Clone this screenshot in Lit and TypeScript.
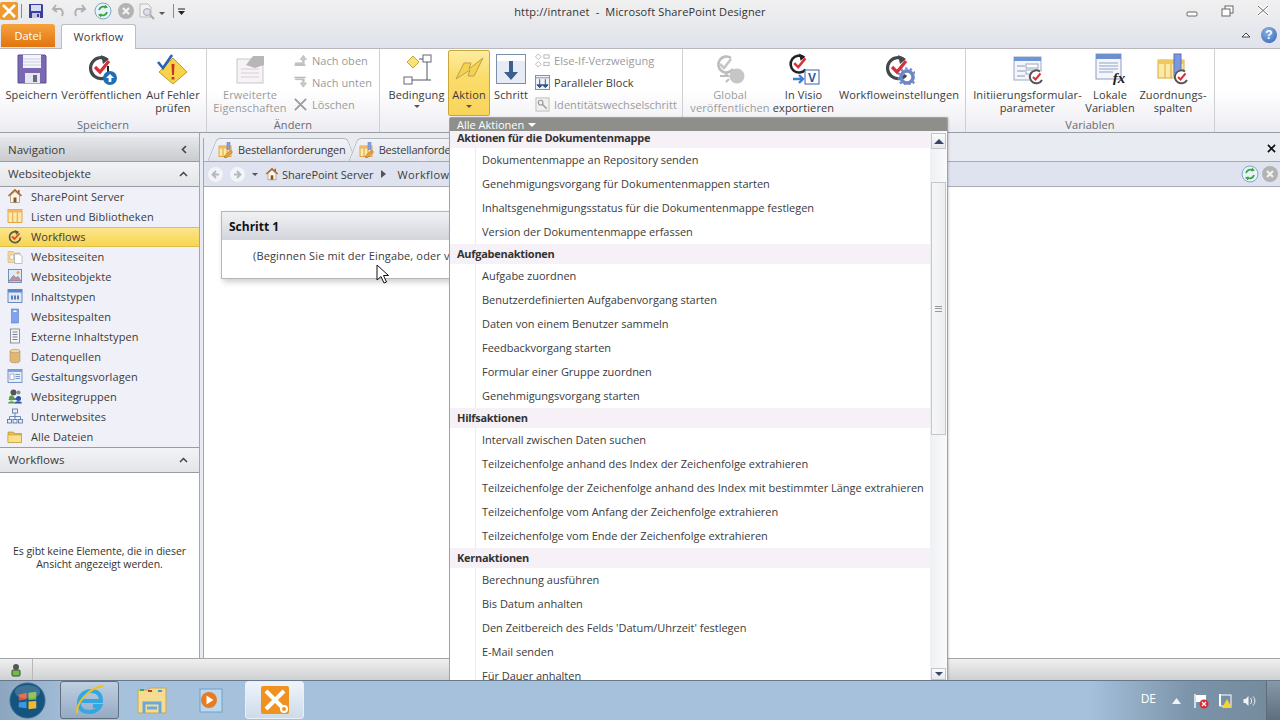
import { LitElement, css, html, svg } from "lit";
import { customElement } from "lit/decorators.js";

const cycle = (dark = "#44474c") => svg`
  <path d="M21 6.5A10.5 10.5 0 1 0 23 22" fill="none" stroke="${dark}" stroke-width="3.2"/>
  <path d="M15 2l8 4-6 5z" fill="${dark}"/>
  <path d="M9 14l5 5 9-11" fill="none" stroke="#d8303a" stroke-width="3.2"/>`;

const miniCycle = svg`
  <circle cx="24" cy="24" r="7.5" fill="#fff"/>
  <path d="M28 18.5A6.5 6.5 0 1 0 30 27" fill="none" stroke="#555" stroke-width="2"/>
  <path d="M21 24l2.5 2.5 5-6" fill="none" stroke="#d8303a" stroke-width="2"/>`;

const ico = (body: unknown, size = 32) =>
  html`<svg width="${size}" height="${size}" viewBox="0 0 32 32">${body}</svg>`;

const ICONS: Record<string, unknown> = {
  save: svg`<path d="M2 2h27l1 1v27H2z" fill="#7a68b3" stroke="#5d4f97"/>
    <rect x="7" y="2" width="18" height="13" fill="#f4f4fb"/>
    <path d="M7 6h18M7 9h18M7 12h18" stroke="#cfd0e6"/>
    <rect x="9" y="20" width="15" height="10" fill="#e6e6ee"/>
    <rect x="17" y="22" width="4" height="7" fill="#6a6a78"/>`,
  publish: svg`${cycle()}
    <path d="M22 13v8" stroke="#222" stroke-width="2"/>
    <circle cx="24" cy="25" r="7" fill="#1f6fb5"/>
    <path d="M24 21l-4 4h2.6v4h2.8v-4H28z" fill="#fff"/>`,
  check: svg`<path d="M16 5l14 14-14 12L2 19z" fill="#f8d24a" stroke="#c79a20"/>
    <path d="M14.5 11h3l-.6 11h-1.8zM14.6 24h2.8v2.6h-2.8z" fill="#c8321e"/>
    <path d="M1 9l5 6L15 2" fill="none" stroke="#2a62b8" stroke-width="2.6"/>`,
  props: svg`<rect x="3" y="6" width="26" height="24" fill="#f5f3f6" stroke="#c9c5cc"/>
    <path d="M7 16h18M7 20h18M7 24h18" stroke="#d8cdd8"/>
    <path d="M12 12l7-9h11v9l-9 3z" fill="#b7b7b7"/>`,
  cond: svg`<path d="M6 9l6-6 6 6-6 6z" fill="#f9e27a" stroke="#c8a52c"/>
    <rect x="22" y="2" width="8" height="7" fill="#fff" stroke="#667"/>
    <rect x="3" y="24" width="8" height="7" fill="#fff" stroke="#667"/>
    <path d="M18 6h4M26 9v18M11 27h19" stroke="#556" fill="none"/>`,
  action: svg`<path d="M3 26L11 10h7l-2 6 14-11-9 18h-6l2-6z" fill="#f6d24e" stroke="#b9a050"/>`,
  step: svg`<rect x="1.5" y="1.5" width="29" height="29" fill="#e6ebf5" stroke="#7d8ea8"/>
    <rect x="2" y="2" width="28" height="6" fill="#fff"/>
    <path d="M14 8h4v11h5l-7 8-7-8h5z" fill="#3c5f8e"/>`,
  global: svg`<g opacity=".55">
    <path d="M17 5A8 8 0 1 0 19 16" fill="none" stroke="#888" stroke-width="2.6"/>
    <path d="M6 11l4 4 7-9" fill="none" stroke="#999" stroke-width="2.6"/>
    <circle cx="23" cy="23" r="7.5" fill="#999"/>
    <path d="M6 23h8l-3-3M12 29l3-3" fill="none" stroke="#888" stroke-width="2"/></g>`,
  visio: svg`<g transform="translate(-1 -1) scale(.8)">${cycle("#222")}</g>
    <rect x="17" y="17" width="14" height="14" fill="#fff" stroke="#3b63a8"/>
    <text x="24" y="29" text-anchor="middle" font-family="Liberation Sans" font-weight="700" font-size="12" fill="#2f5597">V</text>
    <path d="M5 26h9M11 22l4 4-4 4" fill="none" stroke="#3f7fd0" stroke-width="2.4"/>`,
  settings: svg`${cycle()}
    <circle cx="24" cy="24" r="6" fill="none" stroke="#6c87c4" stroke-width="3.5"/>
    <circle cx="24" cy="24" r="8.6" fill="none" stroke="#6c87c4" stroke-width="2" stroke-dasharray="2.4 2.4"/>`,
  init: svg`<rect x="2" y="4" width="27" height="23" fill="#f4f6fb" stroke="#99a8c4"/>
    <rect x="2" y="4" width="27" height="4" fill="#6d95d8"/>
    <path d="M5 13h8M5 18h8M5 23h8" stroke="#8b99b4"/>
    <rect x="14" y="11" width="12" height="4" fill="#fff" stroke="#9aa7bf"/>
    <rect x="14" y="17" width="9" height="4" fill="#fff" stroke="#9aa7bf"/>${miniCycle}`,
  local: svg`<rect x="2" y="1" width="25" height="25" fill="#f4f6fb" stroke="#8e9dba"/>
    <rect x="2" y="1" width="25" height="5" fill="#6d8fd0"/>
    <path d="M5 10h19M5 13h19M5 16h19M5 19h14" stroke="#8fa3c9"/>
    <text x="25" y="30" text-anchor="middle" font-family="Liberation Serif" font-style="italic" font-weight="700" font-size="15" fill="#222">fx</text>`,
  map: svg`<rect x="1" y="7" width="26" height="18" fill="#fbe9a6" stroke="#d8a93c"/>
    <rect x="1" y="7" width="26" height="4" fill="#f0c860"/>
    <path d="M8 11v14M14 11v14" stroke="#d8a93c"/>
    <rect x="17" y="1" width="7" height="22" fill="#7d97dc" stroke="#5872b8"/>${miniCycle}`,
  tabdoc: svg`<rect x="2" y="8" width="24" height="21" fill="#fbe9a6" stroke="#d8922c" stroke-width="1.6"/>
    <rect x="2" y="8" width="24" height="5" fill="#f0b860"/>
    <path d="M10 13v16M18 13v16" stroke="#d8922c" stroke-width="1.6"/>
    <rect x="18" y="1" width="6" height="14" fill="#8aa2e0" stroke="#5872b8"/>
    <path d="M14 27l11-11 4 4-11 11-5 1z" fill="#e8a040" stroke="#8a5a20"/>`,
  home: svg`<path d="M3 16L16 4l13 12" fill="none" stroke="#b8651a" stroke-width="3.4"/>
    <path d="M7 15l9-8 9 8v14H7z" fill="#fbf7ee" stroke="#6a5a3f"/>
    <rect x="13" y="19" width="6" height="10" fill="#8a5520"/>
    <rect x="22" y="4" width="3" height="6" fill="#8a5a30"/>`,
  lists: svg`<rect x="2" y="3" width="28" height="26" fill="#fde9a8" stroke="#e0922c" stroke-width="1.6"/>
    <rect x="2" y="3" width="28" height="6" fill="#f4b55c"/>
    <path d="M11.5 9v20M20.5 9v20" stroke="#e0922c" stroke-width="1.6"/>`,
  wf: svg`<path d="M22 7A11 11 0 1 0 27 17" fill="none" stroke="#5a5a52" stroke-width="3.4"/>
    <path d="M16 2l8 4-6 6z" fill="#5a5a52"/>
    <path d="M10 15l5 5 10-11" fill="none" stroke="#e0452a" stroke-width="3.6"/>`,
  pages: svg`<path d="M2 7h10l2 3h12v19H2z" fill="#f1d9a4" stroke="#c9a160"/>
    <path d="M15 12h10l5 5v14H15z" fill="#fff" stroke="#7c8794"/>
    <rect x="6" y="14" width="7" height="8" fill="#fff" stroke="#c9a160"/>`,
  assets: svg`<rect x="3" y="3" width="26" height="26" fill="#dfeaf8" stroke="#5878a8" stroke-width="1.6"/>
    <path d="M4 26l9-11 5 5 4-3 6 9z" fill="#c98ea0" stroke="#58607a"/>
    <circle cx="22" cy="9" r="3" fill="#e8a840"/>`,
  ctypes: svg`<rect x="2" y="3" width="28" height="26" fill="#dfe9f8" stroke="#4d74ac" stroke-width="1.6"/>
    <rect x="2" y="3" width="28" height="6" fill="#5b87c8"/>
    <path d="M8 15h4v8H8zM14 15h4v8h-4zM20 15h4v8h-4z" fill="#5b7cb0"/>`,
  cols: svg`<rect x="9" y="2" width="14" height="28" fill="#7fa3ee" stroke="#4c6dae"/>
    <rect x="13" y="5" width="6" height="3" fill="#fff"/>`,
  ext: svg`<rect x="7" y="2" width="18" height="28" fill="#f3f4f6" stroke="#6e7580" stroke-width="1.5"/>
    <path d="M11 8h10M11 13h10M11 18h10M11 23h10" stroke="#6e7580" stroke-width="1.8"/>`,
  data: svg`<path d="M6 6v20c0 5 20 5 20 0V6z" fill="#dfb878" stroke="#a3824c"/>
    <ellipse cx="16" cy="6" rx="10" ry="3.6" fill="#f0d7a8" stroke="#a3824c"/>`,
  master: svg`<rect x="2" y="3" width="28" height="26" fill="#e6eefa" stroke="#5276b0" stroke-width="1.5"/>
    <rect x="2" y="3" width="28" height="5" fill="#7ea0dc"/>
    <rect x="6" y="12" width="8" height="11" fill="#fff" stroke="#5276b0"/>
    <path d="M17 13h9M17 17h9M17 21h9" stroke="#5276b0" stroke-width="1.4"/>`,
  groups: svg`<circle cx="13" cy="9" r="6" fill="#555"/><path d="M3 24c0-7 18-7 18 0z" fill="#777"/>
    <circle cx="23" cy="9" r="4" fill="#8a8a8a"/>
    <circle cx="9" cy="20" r="5" fill="#58a048"/><path d="M2 31c0-6 14-6 14 0z" fill="#58a048"/>
    <circle cx="23" cy="21" r="5" fill="#2b50a8"/><path d="M15 31c0-6 15-6 15 0z" fill="#2b50a8"/>`,
  subs: svg`<g fill="#e8eef8" stroke="#4f6f9f" stroke-width="1.6">
    <rect x="11" y="2" width="10" height="8"/><rect x="1" y="23" width="8" height="7"/>
    <rect x="12" y="23" width="8" height="7"/><rect x="23" y="23" width="8" height="7"/></g>
    <path d="M16 10v13M5 23v-6h22v6" fill="none" stroke="#4f6f9f" stroke-width="1.6"/>`,
  folder: svg`<path d="M2 8h11l2 3h14v18H2z" fill="#e8bf50" stroke="#9b7a2a"/>
    <path d="M2 14h27v15H2z" fill="#fbe08a" stroke="#b8922f"/>`,
  up: svg`<path d="M3 26h24" stroke="#b5b5b5" stroke-width="2.5"/><path d="M5 21h15v-7h-5l7-9 7 9h-5v11H5z" fill="#c8c8c8" stroke="#aaa"/>`,
  down: svg`<path d="M3 5h24" stroke="#b5b5b5" stroke-width="2.5"/><path d="M5 10h15v7h-5l7 9 7-9h-5V8H5z" fill="#c8c8c8" stroke="#aaa"/>`,
  del: svg`<path d="M4 4l24 24M28 4L4 28" stroke="#9c9c9c" stroke-width="4"/>`,
  elseif: svg`<g fill="#fff" stroke="#b5b5b5" stroke-width="2"><path d="M7 2l6 6-6 6-6-6zM7 18l6 6-6 6-6-6z"/><rect x="19" y="4" width="11" height="7"/><rect x="19" y="20" width="11" height="7"/></g>`,
  parallel: svg`<rect x="1" y="1" width="30" height="30" fill="#eef2f8" stroke="#7d8ea8" stroke-width="2"/>
    <path d="M2 6h28" stroke="#7d8ea8" stroke-width="2"/>
    <path d="M10 9v12M16 21l-6 6-6-6zM22 9v12M28 21l-6 6-6-6z" fill="#2f4f7f" stroke="#2f4f7f" stroke-width="2"/>`,
  identity: svg`<rect x="2" y="2" width="28" height="28" fill="#f0f0f0" stroke="#bbb" stroke-width="2"/>
    <circle cx="12" cy="12" r="5" fill="none" stroke="#999" stroke-width="2.4"/><path d="M16 16l9 9" stroke="#999" stroke-width="3"/>`,
};

type Big = { w: number; icon: string; lines: string[]; off?: boolean; arrow?: boolean; hot?: boolean };
type Small = { icon: string; label: string; off?: boolean };
type Group = { label: string; w: number; pad: number; big: Big[]; small?: Small[] };

const GROUPS: Group[] = [
  {
    label: "Speichern", w: 207, pad: 4,
    big: [
      { w: 55, icon: "save", lines: ["Speichern"] },
      { w: 85, icon: "publish", lines: ["Veröffentlichen"] },
      { w: 58, icon: "check", lines: ["Auf Fehler", "prüfen"] },
    ],
  },
  {
    label: "Ändern", w: 173, pad: 3,
    big: [{ w: 80, icon: "props", off: true, lines: ["Erweiterte", "Eigenschaften"] }],
    small: [
      { icon: "up", label: "Nach oben", off: true },
      { icon: "down", label: "Nach unten", off: true },
      { icon: "del", label: "Löschen", off: true },
    ],
  },
  {
    label: "", w: 303, pad: 5,
    big: [
      { w: 63, icon: "cond", lines: ["Bedingung"], arrow: true },
      { w: 42, icon: "action", lines: ["Aktion"], arrow: true, hot: true },
      { w: 42, icon: "step", lines: ["Schritt"] },
    ],
    small: [
      { icon: "elseif", label: "Else-If-Verzweigung", off: true },
      { icon: "parallel", label: "Paralleler Block" },
      { icon: "identity", label: "Identitätswechselschritt", off: true },
    ],
  },
  {
    label: "", w: 283, pad: 8,
    big: [
      { w: 78, icon: "global", off: true, lines: ["Global", "veröffentlichen"] },
      { w: 69, icon: "visio", lines: ["In Visio", "exportieren"] },
      { w: 122, icon: "settings", lines: ["Workfloweinstellungen"] },
    ],
  },
  {
    label: "Variablen", w: 249, pad: 6,
    big: [
      { w: 111, icon: "init", lines: ["Initiierungsformular-", "parameter"] },
      { w: 54, icon: "local", lines: ["Lokale", "Variablen"] },
      { w: 72, icon: "map", lines: ["Zuordnungs-", "spalten"] },
    ],
  },
];

const NAV: [string, string][] = [
  ["home", "SharePoint Server"],
  ["lists", "Listen und Bibliotheken"],
  ["wf", "Workflows"],
  ["pages", "Websiteseiten"],
  ["assets", "Websiteobjekte"],
  ["ctypes", "Inhaltstypen"],
  ["cols", "Websitespalten"],
  ["ext", "Externe Inhaltstypen"],
  ["data", "Datenquellen"],
  ["master", "Gestaltungsvorlagen"],
  ["groups", "Websitegruppen"],
  ["subs", "Unterwebsites"],
  ["folder", "Alle Dateien"],
];

const ACTIONS: [string, string[]][] = [
  ["Aktionen für die Dokumentenmappe", [
    "Dokumentenmappe an Repository senden",
    "Genehmigungsvorgang für Dokumentenmappen starten",
    "Inhaltsgenehmigungsstatus für die Dokumentenmappe festlegen",
    "Version der Dokumentenmappe erfassen",
  ]],
  ["Aufgabenaktionen", [
    "Aufgabe zuordnen",
    "Benutzerdefinierten Aufgabenvorgang starten",
    "Daten von einem Benutzer sammeln",
    "Feedbackvorgang starten",
    "Formular einer Gruppe zuordnen",
    "Genehmigungsvorgang starten",
  ]],
  ["Hilfsaktionen", [
    "Intervall zwischen Daten suchen",
    "Teilzeichenfolge anhand des Index der Zeichenfolge extrahieren",
    "Teilzeichenfolge der Zeichenfolge anhand des Index mit bestimmter Länge extrahieren",
    "Teilzeichenfolge vom Anfang der Zeichenfolge extrahieren",
    "Teilzeichenfolge vom Ende der Zeichenfolge extrahieren",
  ]],
  ["Kernaktionen", [
    "Berechnung ausführen",
    "Bis Datum anhalten",
    "Den Zeitbereich des Felds 'Datum/Uhrzeit' festlegen",
    "E-Mail senden",
    "Für Dauer anhalten",
  ]],
];

const refresh = html`<svg width="18" height="18" viewBox="0 0 18 18">
  <circle cx="9" cy="9" r="8" fill="#e8f2fb" stroke="#7ea6cc"/>
  <path d="M5 8a4.5 4.5 0 0 1 7-2.500" fill="none" stroke="#3aa63a" stroke-width="1.800"/>
  <path d="M13 10a4.5 4.5 0 0 1-7 2.500" fill="none" stroke="#3aa63a" stroke-width="1.800"/>
  <path d="M11 2.500l3 3-3.600 1zM7 15.500l-3-3 3.600-1z" fill="#3aa63a"/></svg>`;
const stop = html`<svg width="18" height="18" viewBox="0 0 18 18">
  <circle cx="9" cy="9" r="8" fill="#b3b3b3"/>
  <path d="M6 6l6 6M12 6l-6 6" stroke="#f2f2f2" stroke-width="2.200"/></svg>`;

@customElement("app-root")
export class AppRoot extends LitElement {
  static styles = css`
    :host {
      display: block;
      position: relative;
      width: 1280px;
      height: 720px;
      overflow: hidden;
      font-family: "Open Sans", "Liberation Sans", sans-serif;
      font-size: 11px;
      color: #3b3b3b;
      background: #fff;
    }
    svg { display: block; flex: none; }
    .app { display: flex; flex-direction: column; height: 720px; }
    .top { background: linear-gradient(#f0f0f0, #e0e3ec); height: 48px; flex: none; }
    .title-row { display: grid; grid-template-columns: 1fr auto 1fr; height: 24px; align-items: center; }
    .qat { display: flex; align-items: center; padding-bottom: 2px; }
    .qat-sep { width: 1px; height: 14px; background: #8a8a8a; }
    .qat-sep.first { margin: 0 6px 0 3px; }
    .qat-sep.second { margin: 0 4px 0 8px; }
    .qat-save { margin-right: 7px; }
    .qat-undo { margin-right: 8px; }
    .qat-redo { margin-right: 7px; }
    .qat-stop { margin: 0 3px 0 5px; }
    .qat-caret { margin: 0 0 0 3px; border-top-color: #222; }
    .title { font-size: 11px; letter-spacing: .15px; color: #333; white-space: pre; padding-bottom: 1px; }
    .winbtns { display: flex; justify-content: flex-end; gap: 21px; padding: 0 10px 3px 0; align-items: center; }
    .winbtns .min { margin-right: 2px; }
    .tab-row { display: flex; height: 24px; align-items: flex-end; }
    .tab-file {
      width: 54px; height: 23px; margin-left: 1px; margin-bottom: 1px;
      background: linear-gradient(#f5a33e, #e2740f);
      color: #fff; border-radius: 3px 3px 0 0;
      display: flex; align-items: center; justify-content: center;
    }
    .tab-wf {
      width: 75px; height: 25px; margin-left: 6px; margin-bottom: -1px; padding-bottom: 2px;
      background: #fff; letter-spacing: .15px;
      border: 1px solid #bdbdbd; border-bottom: none; border-radius: 3px 3px 0 0;
      display: flex; align-items: center; justify-content: center;
      box-sizing: border-box; position: relative; z-index: 1;
    }
    .tab-tools { margin-left: auto; display: flex; align-items: center; gap: 10px; padding: 0 3px 5px 0; }
    .help {
      width: 16px; height: 16px; border-radius: 50%;
      background: radial-gradient(circle at 40% 30%, #8db2e8, #2f62b5);
      color: #fff; font: 700 12px/16px "Liberation Sans", sans-serif; text-align: center;
    }
    .ribbon {
      height: 85px; flex: none; display: flex; box-sizing: border-box;
      border-top: 1px solid #b9b9bb; border-bottom: 1px solid #9b9ea3;
      background: linear-gradient(#fff 50%, #f4f4f8 80%, #ebecf2);
    }
    .group { display: flex; flex-direction: column; box-sizing: border-box; border-right: 1px solid #cfd0d4; height: 83px; flex: none; }
    .group-body { display: flex; height: 69px; box-sizing: border-box; }
    .group-label { text-align: center; color: #666b73; height: 13px; line-height: 13px; letter-spacing: .1px; }
    .big { display: flex; flex-direction: column; align-items: center; height: 66px; margin-top: 1px; box-sizing: border-box; padding-top: 3px; flex: none; white-space: nowrap; letter-spacing: .12px; }
    .big .art { height: 32px; flex: none; margin-bottom: 3px; }
    .big .line { line-height: 13px; }
    .off { color: #9b9b9b; }
    .hot {
      border: 1px solid #c9a63c; border-radius: 2px; padding-top: 2px;
      background: linear-gradient(#fdeb9f, #fbdc6b 40%, #f9d55c);
    }
    .caret { width: 0; height: 0; border: 3px solid transparent; border-top: 3px solid #555; border-bottom: none; margin-top: 4px; }
    .small-col { display: flex; flex-direction: column; margin-left: 3px; }
    .small { display: flex; align-items: center; gap: 4px; height: 22px; white-space: nowrap; letter-spacing: .04px; }
    .body { flex: 1; display: flex; min-height: 0; background: #e9ebf2; }
    .nav { width: 200px; flex: none; display: flex; flex-direction: column; border-right: 1px solid #a4a6aa; box-sizing: border-box; background: #fff; }
    .nav-gap { height: 4px; background: #eceef3; flex: none; }
    .nav-title {
      height: 25px; flex: none; display: flex; align-items: center; justify-content: space-between;
      padding: 0 12px 0 8px; font-size: 11.5px; box-sizing: border-box;
      background: linear-gradient(#e6e7ea, #c9cbd0); border-bottom: 1px solid #9a9c9f;
    }
    .nav-head {
      height: 25px; flex: none; display: flex; align-items: center; justify-content: space-between;
      padding: 0 11px 1px 8px; font-size: 11.5px; box-sizing: border-box;
      background: linear-gradient(#f2f3f6, #e4e5ea); border-bottom: 1px solid #9a9c9f;
    }
    .nav-list { background: #f0f1f8; border-bottom: 1px solid #9a9c9f; flex: none; }
    .nav-item { height: 20px; display: flex; align-items: center; gap: 8px; padding: 0 0 2px 7px; box-sizing: border-box; letter-spacing: .08px; }
    .nav-item.sel { background: linear-gradient(#fbe58e, #f8d54e); border-top: 1px solid #dcc150; border-bottom: 1px solid #dcc150; padding-bottom: 1px; }
    .nav-empty { flex: 1; background: #fff; text-align: center; padding-top: 72px; line-height: 13px; color: #333; font-size: 10.5px; letter-spacing: -.06px; }
    .main { flex: 1; min-width: 0; display: flex; flex-direction: column; margin-left: 3px; border-left: 1px solid #a4a6aa; margin-top: 5px; }
    .tabs { height: 24px; flex: none; display: flex; align-items: flex-end; justify-content: space-between; padding-left: 8px; margin-top: -1px; position: relative; }
    .doc-tabs { display: flex; gap: 1px; }
    .doc-tab {
      position: relative; z-index: 0;
      display: flex; align-items: center; gap: 4px; height: 23px; padding: 0 6px; box-sizing: border-box;
      white-space: nowrap; letter-spacing: -.2px;
    }
    .doc-tab::before, .doc-tab::after {
      content: ""; position: absolute; top: 0; bottom: 0; width: 50%; z-index: -1;
      background: linear-gradient(#f2f3f7, #e2e4ec); border-top: 1px solid #b4b6bc; box-sizing: border-box;
    }
    .doc-tab::before { left: 0; transform: skewX(-22deg); border-left: 1px solid #b4b6bc; border-radius: 4px 0 0 0; }
    .doc-tab::after { right: 0; transform: skewX(22deg); border-right: 1px solid #b4b6bc; border-radius: 0 4px 0 0; }
    .close-x { margin: 0 4px 8px 0; }
    .crumbs {
      height: 26px; flex: none; display: flex; align-items: center; box-sizing: border-box;
      background: #dfe3ef; border-top: 1px solid #a8aab0; border-bottom: 1px solid #a8aab0;
      padding: 0 1px 0 4px; gap: 4px; position: relative; z-index: 1;
    }
    .back { width: 15px; height: 15px; border-radius: 50%; background: #f3f4f8; margin-right: 3px; display: flex; align-items: center; justify-content: center; }
    .crumb-caret { margin: 0 3px 0 0; }
    .crumb-home { margin-right: -1px; }
    .crumb-sep { margin: 0 5px 0 3px; }
    .crumb-text { white-space: nowrap; letter-spacing: -.03px; }
    .crumb-text.wide { letter-spacing: .4px; }
    .crumb-tools { margin-left: auto; display: flex; gap: 2px; }
    .canvas { flex: 1; background: #fff; padding: 24px 0 0 17px; }
    .card { width: 400px; height: 68px; box-sizing: border-box; border: 1px solid #b6b7ba; box-shadow: 2px 3px 6px rgba(0,0,0,.2); background: #fff; }
    .card-head { height: 28px; background: linear-gradient(#f1f2f5, #d3d5dc); padding: 1px 0 0 7px; box-sizing: border-box; font-weight: 700; font-size: 12px; color: #111; display: flex; align-items: center; }
    .card-body { padding: 8px 0 0 31px; letter-spacing: .15px; white-space: nowrap; }
    .status { height: 22px; flex: none; display: flex; align-items: center; background: linear-gradient(#f0f0f0, #cfd0d2); border-top: 1px solid #a4a6aa; box-sizing: border-box; }
    .status-cell { width: 33px; height: 100%; display: flex; align-items: center; justify-content: center; border-right: 1px solid #b8b8ba; box-sizing: border-box; }
    .taskbar {
      height: 40px; flex: none; display: flex; align-items: flex-start; box-sizing: border-box; border-top: 1px solid #67788a;
      background: linear-gradient(90deg, #8ca6c0, #a6c1dc 6%, #a6c1dc 85%, #7b94aa 93%, #74899b);
      position: relative; z-index: 3;
    }
    .orb { width: 60px; flex: none; display: flex; justify-content: center; padding: 1px 6px 0 0; box-sizing: border-box; }
    .task { width: 59px; height: 38px; display: flex; align-items: center; justify-content: center; box-sizing: border-box; flex: none; }
    .task.on { border: 1px solid #60707f; border-radius: 3px; background: linear-gradient(#c0d0e2, #94aac4); margin-right: 3px; }
    .task.active { border: 1px solid #e8eff7; border-radius: 3px; background: linear-gradient(#eff4fa, #cddbea); margin-left: 5px; }
    .tray { margin-left: auto; display: flex; align-items: center; color: #fff; height: 100%; }
    .lang { font-size: 12px; margin: 0 16px 5px 0; }
    .tray-up { margin-right: 12px; }
    .tray-flag { margin-right: 8px; }
    .tray-net { margin-right: 9px; }
    .tray-spk { margin-right: 9px; }
    .show-desk { width: 14px; height: 100%; box-sizing: border-box; border-left: 1px solid #5d6d7c; background: linear-gradient(#8798a8, #5d6f80); }
    .menu {
      position: absolute; left: 449px; top: 117px; width: 499px; height: 563px; z-index: 2;
      display: flex; flex-direction: column; box-sizing: border-box;
      background: #fff; border: 1px solid #a0a2a6; border-bottom: none; border-radius: 2px 2px 0 0;
      box-shadow: 1px 0 2px rgba(0,0,0,.15);
    }
    .menu-head { height: 13px; flex: none; background: #8e8f8b; color: #fff; padding-left: 7px; line-height: 13px; display: flex; align-items: center; gap: 4px; }
    .menu-head i { width: 0; height: 0; border: 4px solid transparent; border-top: 4px solid #fff; border-bottom: none; }
    .menu-body { flex: 1; display: flex; min-height: 0; }
    .list { flex: 1; overflow: hidden; position: relative; }
    .list-inner { margin-top: -3px; }
    .cat { height: 20px; background: #f6f1f6; font-weight: 700; padding-left: 7px; line-height: 20px; color: #333; letter-spacing: -.28px; }
    .act { height: 24px; line-height: 24px; white-space: nowrap; margin-left: 25px; padding-left: 6px; border-left: 1px solid #ebebee; color: #3b3b3b; letter-spacing: -.02px; }
    .sb { width: 17px; flex: none; background: linear-gradient(90deg, #eef0f3, #fafafb); display: flex; flex-direction: column; align-items: center; padding-top: 2px; box-sizing: border-box; }
    .sb-btn { width: 15px; height: 16px; flex: none; box-sizing: border-box; border: 1px solid #c4c6cc; background: linear-gradient(#fbfbfc, #e6e8ec); display: flex; align-items: center; justify-content: center; }
    .sb-thumb { width: 15px; height: 253px; flex: none; margin-top: 33px; box-sizing: border-box; border: 1px solid #c4c6cc; background: linear-gradient(90deg, #f7f7f9, #eceef1); display: flex; align-items: center; justify-content: center; }
    .grip { width: 7px; height: 6px; border-top: 1px solid #999; border-bottom: 1px solid #999; box-sizing: border-box; background: linear-gradient(#999, #999) center/7px 1px no-repeat; }
    .sb-btn.end { margin-top: auto; height: 12px; }
    .tri-up { width: 0; height: 0; border: 5px solid transparent; border-bottom: 5px solid #3a4468; border-top: none; }
    .tri-down { width: 0; height: 0; border: 4px solid transparent; border-top: 4px solid #3a4468; border-bottom: none; }
    .cursor { position: absolute; left: 376px; top: 264px; z-index: 1; }
  `;

  private big(b: Big) {
    return html`<div class="big ${b.off ? "off" : ""} ${b.hot ? "hot" : ""}" style="width:${b.w}px">
      <div class="art">${ico(ICONS[b.icon])}</div>
      ${b.lines.map((l) => html`<div class="line">${l}</div>`)}
      ${b.arrow ? html`<div class="caret"></div>` : ""}
    </div>`;
  }

  private group(g: Group) {
    return html`<div class="group" style="width:${g.w}px">
      <div class="group-body" style="padding-left:${g.pad}px">
        ${g.big.map((b) => this.big(b))}
        ${g.small
          ? html`<div class="small-col">
              ${g.small.map(
                (s) => html`<div class="small ${s.off ? "off" : ""}">${ico(ICONS[s.icon], 15)}<span>${s.label}</span></div>`
              )}
            </div>`
          : ""}
      </div>
      <div class="group-label">${g.label}</div>
    </div>`;
  }

  private chev() {
    return html`<svg width="9" height="6" viewBox="0 0 9 6"><path d="M1 5l3.500-3.500L8 5" fill="none" stroke="#444" stroke-width="1.500"/></svg>`;
  }

  render() {
    return html`<div class="app">
        <div class="top">
          <div class="title-row">
            <div class="qat">
              <svg width="18" height="18" viewBox="0 0 18 18">
                <rect width="18" height="18" rx="2" fill="#f09a2e"/>
                <path d="M3 3l12 12M15 3L3 15" stroke="#fff" stroke-width="2.600"/>
              </svg>
              <div class="qat-sep first"></div>
              <svg class="qat-save" width="16" height="16" viewBox="0 0 16 16">
                <path d="M1 1h13l1 1v13H1z" fill="#3b3f9a"/><rect x="3" y="2" width="10" height="6" fill="#d5daf5"/><rect x="4" y="10" width="8" height="5" fill="#c2c6e2"/><rect x="9" y="11" width="2" height="3" fill="#3b3f9a"/>
              </svg>
              <svg class="qat-undo" width="14" height="14" viewBox="0 0 14 14"><path d="M11 12c2-4 0-8-4-7H3M5 1L2 5l4 3" fill="none" stroke="#b0b0b0" stroke-width="2"/></svg>
              <svg class="qat-redo" width="14" height="14" viewBox="0 0 14 14"><path d="M3 12c-2-4 0-8 4-7h4M9 1l3 4-4 3" fill="none" stroke="#b0b0b0" stroke-width="2"/></svg>
              ${refresh}
              <span class="qat-stop">${stop}</span>
              <svg width="18" height="18" viewBox="0 0 18 18"><path d="M2 2h8l3 3v10H2z" fill="#f2f2f2" stroke="#bbb"/><circle cx="9" cy="10" r="3.500" fill="#dde" stroke="#aaa"/><path d="M12 13l4 4" stroke="#aaa" stroke-width="2"/></svg>
              <div class="caret qat-caret"></div>
              <div class="qat-sep second"></div>
              <svg width="7" height="7" viewBox="0 0 7 7"><path d="M0 1h7" stroke="#222"/><path d="M0 3h7L3.500 7z" fill="#222"/></svg>
            </div>
            <div class="title">http://intranet  -  Microsoft SharePoint Designer</div>
            <div class="winbtns">
              <svg class="min" width="12" height="12" viewBox="0 0 12 12"><rect x="1" y="7" width="10" height="4" rx="1" fill="#fff" stroke="#666"/></svg>
              <svg width="14" height="14" viewBox="0 0 14 14"><rect x="4" y="2" width="8" height="7" fill="#fff" stroke="#666"/><rect x="1" y="5" width="8" height="7" fill="#fff" stroke="#666"/></svg>
              <svg width="14" height="14" viewBox="0 0 14 14"><path d="M2 2l10 9M12 2L2 11" stroke="#fff" stroke-width="3.400"/><path d="M2 2l10 9M12 2L2 11" stroke="#666" fill="none"/></svg>
            </div>
          </div>
          <div class="tab-row">
            <div class="tab-file">Datei</div>
            <div class="tab-wf">Workflow</div>
            <div class="tab-tools">
              <svg width="10" height="8" viewBox="0 0 10 8"><path d="M1 6l4-4 4 4z" fill="#fff" stroke="#444"/></svg>
              <div class="help">?</div>
            </div>
          </div>
        </div>
        <div class="ribbon">${GROUPS.map((g) => this.group(g))}</div>
        <div class="body">
          <div class="nav">
            <div class="nav-gap"></div>
            <div class="nav-title"><span>Navigation</span>
              <svg width="6" height="9" viewBox="0 0 6 9"><path d="M5 1L1.500 4.500 5 8" fill="none" stroke="#444" stroke-width="1.600"/></svg>
            </div>
            <div class="nav-head"><span>Websiteobjekte</span>${this.chev()}</div>
            <div class="nav-list">
              ${NAV.map(
                ([i, t]) => html`<div class="nav-item ${t === "Workflows" ? "sel" : ""}">${ico(ICONS[i], 16)}<span>${t}</span></div>`
              )}
            </div>
            <div class="nav-head"><span>Workflows</span>${this.chev()}</div>
            <div class="nav-empty">Es gibt keine Elemente, die in dieser<br />Ansicht angezeigt werden.</div>
          </div>
          <div class="main">
            <div class="tabs">
              <div class="doc-tabs">
                ${["Bestellanforderungen", "Bestellanforderungen"].map(
                  (t) => html`<div class="doc-tab">${ico(ICONS.tabdoc, 16)}<span>${t}</span></div>`
                )}
              </div>
              <svg class="close-x" width="9" height="9" viewBox="0 0 10 10"><path d="M1 1l8 8M9 1L1 9" stroke="#111" stroke-width="1.800"/></svg>
            </div>
            <div class="crumbs">
              <div class="back"><svg width="9" height="9" viewBox="0 0 9 9"><path d="M8 4.500H2M5 1L1.500 4.500 5 8" fill="none" stroke="#b4b7c0" stroke-width="1.800"/></svg></div>
              <div class="back"><svg width="9" height="9" viewBox="0 0 9 9"><path d="M1 4.500h6M4 1l3.500 3.500L4 8" fill="none" stroke="#b4b7c0" stroke-width="1.800"/></svg></div>
              <div class="caret crumb-caret"></div>
              <span class="crumb-home">${ico(ICONS.home, 14)}</span>
              <span class="crumb-text">SharePoint Server</span>
              <svg class="crumb-sep" width="8" height="8" viewBox="0 0 8 8"><path d="M1 0l5 4-5 4z" fill="#555"/></svg>
              <span class="crumb-text wide">Workflows</span>
              <div class="crumb-tools">${refresh}${stop}</div>
            </div>
            <div class="canvas">
              <div class="card">
                <div class="card-head">Schritt 1</div>
                <div class="card-body">(Beginnen Sie mit der Eingabe, oder verwenden Sie den Katalog)</div>
              </div>
            </div>
          </div>
        </div>
        <div class="status">
          <div class="status-cell">
            <svg width="10" height="14" viewBox="0 0 10 14"><circle cx="5" cy="4" r="3" fill="#555"/><rect x="1" y="7" width="8" height="6" rx="1" fill="#6cc04a" stroke="#444"/></svg>
          </div>
        </div>
        <div class="taskbar">
          <div class="orb">
            <svg width="37" height="37" viewBox="0 0 38 38">
              <circle cx="19" cy="19" r="18" fill="#14557f" stroke="#3f6a8c"/>
              <path d="M10 13l8-2v7l-8 1z" fill="#e8502c"/><path d="M20 11l8-1v8l-8 .5z" fill="#82b83a"/>
              <path d="M10 21l8-1v7l-8-1z" fill="#3a9ae0"/><path d="M20 20l8-.5V27l-8 1z" fill="#f4b82c"/>
              <ellipse cx="19" cy="10" rx="13" ry="7" fill="#fff" opacity=".18"/>
            </svg>
          </div>
          <div class="task on">
            <svg width="32" height="32" viewBox="0 0 32 32">
              <path d="M5 17h22c0-7-4-10-10-10-6 0-12 4-12 12 0 6 4 9 10 9 5 0 9-2 11-6h-7" fill="none" stroke="#35a7e0" stroke-width="4"/>
              <path d="M3 29C2 20 14 4 29 2" fill="none" stroke="#f0c020" stroke-width="2"/>
            </svg>
          </div>
          <div class="task">
            <svg width="32" height="30" viewBox="0 0 32 30">
              <path d="M2 5h10l2-2h16v25H2z" fill="#f5dc90" stroke="#c8a850"/>
              <rect x="4" y="4" width="4" height="2" fill="#3eb040"/><rect x="12" y="5" width="4" height="2" fill="#c83a30"/><rect x="22" y="5" width="4" height="2" fill="#3a9ae0"/>
              <path d="M8 28V18h16v10M11 23h10" fill="none" stroke="#6aa8d8" stroke-width="3"/>
            </svg>
          </div>
          <div class="task">
            <svg width="28" height="28" viewBox="0 0 28 28">
              <rect x="3" y="3" width="22" height="23" fill="#bcd8ee" stroke="#6fa0c8"/>
              <circle cx="12" cy="14" r="8" fill="#e87a20"/><path d="M9.500 9.500l7 4.500-7 4.500z" fill="#fff"/>
            </svg>
          </div>
          <div class="task active">
            <svg width="30" height="30" viewBox="0 0 30 30">
              <rect x="1" y="1" width="28" height="28" rx="2" fill="#f0921f"/>
              <path d="M6 6l18 18M24 6L6 24" stroke="#fff" stroke-width="4"/>
              <circle cx="24" cy="24" r="3" fill="#f0921f" stroke="#fff" stroke-width="2"/>
            </svg>
          </div>
          <div class="tray">
            <span class="lang">DE</span>
            <svg class="tray-up" width="9" height="6" viewBox="0 0 9 6"><path d="M0 6l4.500-6L9 6z" fill="#eef3f8"/></svg>
            <svg class="tray-flag" width="16" height="16" viewBox="0 0 16 16"><path d="M2 1v14" stroke="#fff" stroke-width="1.400"/><path d="M3 2h10v7H3z" fill="#fff"/><circle cx="11" cy="11" r="4.500" fill="#d92c34"/><path d="M9 9l4 4M13 9l-4 4" stroke="#fff" stroke-width="1.200"/></svg>
            <svg class="tray-net" width="16" height="16" viewBox="0 0 16 16"><rect x="3" y="2" width="11" height="11" fill="none" stroke="#fff"/><path d="M3 1v12" stroke="#fff" stroke-width="2"/><path d="M10 6l5 9H5z" fill="#f4d430"/></svg>
            <svg class="tray-spk" width="15" height="14" viewBox="0 0 14 14"><path d="M1 5h2l3-3v10L3 9H1z" fill="#eef3f8"/><path d="M8 4c1.500 1.500 1.500 4.500 0 6M10.500 2.500c2.500 2.500 2.500 6.500 0 9" fill="none" stroke="#eef3f8"/></svg>
            <div class="show-desk"></div>
          </div>
        </div>
      </div>
      <div class="menu">
        <div class="menu-head"><span>Alle Aktionen</span><i></i></div>
        <div class="menu-body">
          <div class="list">
            <div class="list-inner">
              ${ACTIONS.map(
                ([cat, items]) => html`<div class="cat">${cat}</div>
                  ${items.map((t) => html`<div class="act">${t}</div>`)}`
              )}
            </div>
          </div>
          <div class="sb">
            <div class="sb-btn"><div class="tri-up"></div></div>
            <div class="sb-thumb"><div class="grip"></div></div>
            <div class="sb-btn end"><div class="tri-down"></div></div>
          </div>
        </div>
      </div>
      <svg class="cursor" width="13" height="20" viewBox="0 0 13 20">
        <path d="M1 1v15l4-3.500 3 6.500 2.500-1-3-6.500h5z" fill="#fff" stroke="#111"/>
      </svg>`;
  }
}
